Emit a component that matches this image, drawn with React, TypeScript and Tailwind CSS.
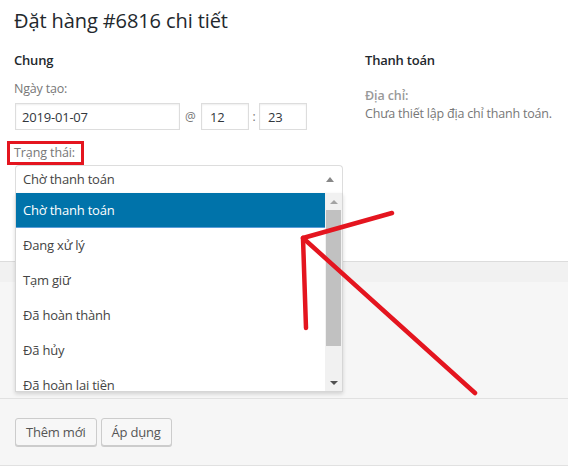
import { FunctionComponent } from "react";

const statuses = [
  "Chờ thanh toán",
  "Đang xử lý",
  "Tạm giữ",
  "Đã hoàn thành",
  "Đã hủy",
  "Đã hoàn lại tiền",
];

const Dropdown: FunctionComponent = () => {
  return (
    <div className="absolute left-0 top-full w-[328px] h-[199px] bg-white border border-[#d6d6d6] border-t-0 shadow-[0_2px_4px_rgba(0,0,0,0.15)] flex flex-row overflow-hidden z-10">
      <div className="flex-1 flex flex-col">
        {statuses.map((s, i) => (
          <div
            key={s}
            className={`h-[35px] shrink-0 flex items-center px-[7px] text-[13px] tracking-[-0.2px] whitespace-nowrap ${
              i === 0 ? "bg-[#0073aa] text-white border-b border-[#5b9dd9]" : "text-[#444]"
            }`}
          >
            {s}
          </div>
        ))}
      </div>
      <div className="w-[17px] bg-[#f1f1f1] flex flex-col items-center">
        <div className="h-[17px] flex items-center justify-center">
          <div className="w-0 h-0 border-l-[4px] border-r-[4px] border-b-[4px] border-l-transparent border-r-transparent border-b-[#a3a3a3]" />
        </div>
        <div className="w-[15px] h-[136px] bg-[#c1c1c1]" />
        <div className="flex-1" />
        <div className="h-[17px] flex items-center justify-center">
          <div className="w-0 h-0 border-l-[4px] border-r-[4px] border-t-[4px] border-l-transparent border-r-transparent border-t-[#505050]" />
        </div>
      </div>
    </div>
  );
};

const App: FunctionComponent = () => {
  return (
    <div className="relative w-[568px] h-[468px] overflow-hidden bg-white text-[#444] font-['Open_Sans',_'Noto_Sans',_sans-serif]">
      <div className="px-[14px]">
        <h1 className="h-[42px] flex items-center text-[20px] tracking-[-0.1px] text-[#23282d] font-normal whitespace-nowrap">
          Đặt hàng #6816 chi tiết
        </h1>
        <div className="flex flex-row">
          <div className="w-[351px] flex flex-col">
            <div className="h-[38px] flex items-center text-[13px] tracking-[-0.2px] font-semibold text-[#23282d]">
              Chung
            </div>
            <div className="h-[18px] flex items-center text-[12.5px] tracking-[-0.2px] text-[#777]">
              Ngày tạo:
            </div>
            <div className="mt-[5px] flex flex-row items-center">
              <input
                readOnly
                value="2019-01-07"
                className="ml-[1px] w-[165px] h-[27px] border border-[#ddd] px-[6px] text-[13px] tracking-[-0.2px] text-[#32373c] shadow-[inset_0_1px_2px_rgba(0,0,0,0.07)] outline-none"
              />
              <span className="w-[21px] text-center text-[12px] text-[#777]">@</span>
              <input
                readOnly
                value="12"
                className="w-[48px] h-[27px] border border-[#ddd] px-[8px] text-[13px] tracking-[-0.2px] text-[#32373c] shadow-[inset_0_1px_2px_rgba(0,0,0,0.07)] outline-none"
              />
              <span className="w-[10px] text-center text-[12px] text-[#777]">:</span>
              <input
                readOnly
                value="23"
                className="w-[48px] h-[27px] border border-[#ddd] px-[8px] text-[13px] tracking-[-0.2px] text-[#32373c] shadow-[inset_0_1px_2px_rgba(0,0,0,0.07)] outline-none"
              />
            </div>
            <div className="mt-[9px]">
              <span className="-ml-[7px] inline-flex items-center h-[24px] border-[3px] border-[#e4151f] pl-[4px] pr-[6px] text-[12.5px] tracking-[-0.1px] text-[#777]">
                Trạng thái:
              </span>
            </div>
            <div className="relative ml-[1px] w-[328px]">
              <div className="h-[28px] border border-[#ddd] border-b-0 rounded-t-[4px] flex items-center justify-between pl-[7px] pr-[8px] text-[13px] tracking-[-0.2px] text-[#444]">
                <span>Chờ thanh toán</span>
                <div className="w-0 h-0 border-l-[4px] border-r-[4px] border-b-[5px] border-l-transparent border-r-transparent border-b-[#888]" />
              </div>
              <Dropdown />
            </div>
          </div>
          <div className="flex-1 flex flex-col">
            <div className="h-[38px] flex items-center text-[13px] tracking-[-0.2px] font-semibold text-[#23282d]">
              Thanh toán
            </div>
            <div className="mt-[7px] h-[18px] flex items-center text-[12.5px] tracking-[-0.1px] font-semibold text-[#999]">
              Địa chỉ:
            </div>
            <div className="h-[18px] flex items-center text-[12.5px] tracking-[-0.2px] text-[#777] whitespace-nowrap">
              Chưa thiết lập địa chỉ thanh toán.
            </div>
          </div>
        </div>
      </div>
      <div className="mt-[68px] border-t border-[#dcdcdc] bg-[#f1f1f1] h-[21px]" />
      <div className="bg-[#f6f6f6] h-[116px]" />
      <div className="border-t border-[#e1e1e1] bg-[#f6f6f6] h-[68px] border-b flex flex-row items-start gap-[4px] pt-[19px] px-[15px]">
        <button className="h-[28px] px-[10px] rounded-[3px] border border-[#ccc] bg-[#f7f7f7] shadow-[0_1px_0_#ccc] text-[13px] tracking-[-0.2px] text-[#555]">
          Thêm mới
        </button>
        <button className="h-[28px] px-[10px] rounded-[3px] border border-[#ccc] bg-[#f7f7f7] shadow-[0_1px_0_#ccc] text-[13px] tracking-[-0.2px] text-[#555]">
          Áp dụng
        </button>
      </div>
      <svg
        className="absolute inset-0 pointer-events-none z-20"
        width="568"
        height="468"
        viewBox="0 0 568 468"
      >
        <g stroke="#e4151f" strokeWidth="4.5" strokeLinecap="round" strokeLinejoin="round" fill="none">
          <polyline points="392,213 303,238 306,328" />
          <line x1="303" y1="238" x2="475" y2="393" />
        </g>
      </svg>
    </div>
  );
};

export default App;
